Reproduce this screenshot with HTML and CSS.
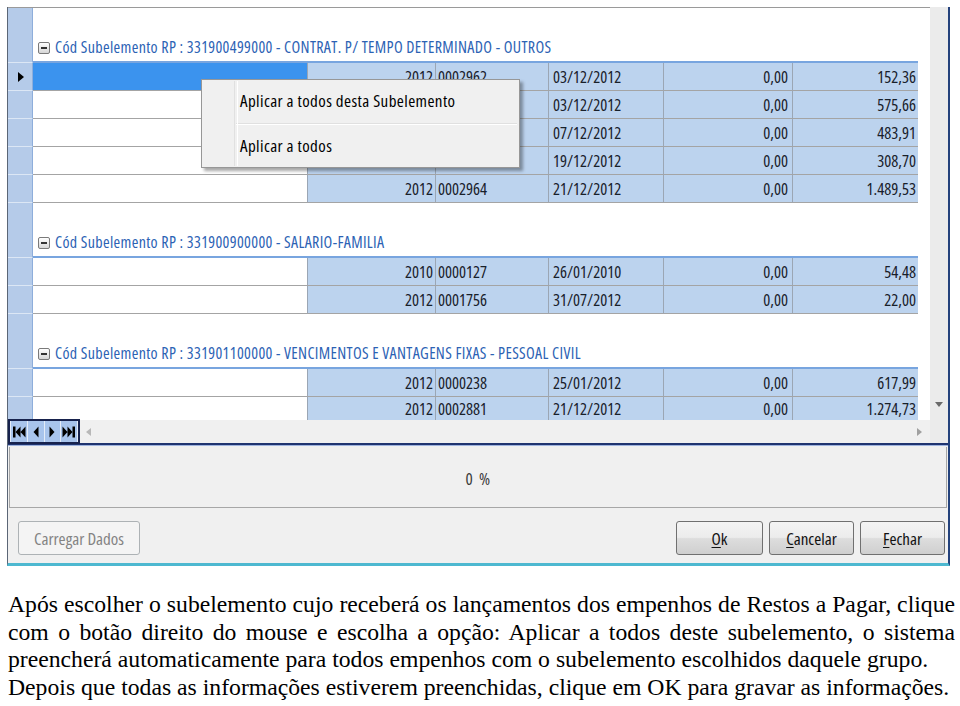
FILE: index.html
```html
<!DOCTYPE html>
<html lang="pt">
<head>
<meta charset="utf-8">
<title>Subelemento RP</title>
<link rel="stylesheet" href="styles.css">
</head>
<body>
<div class="shot">
  <div class="window">
    <div class="gridpanel">
      <div class="gridleft">
        <div class="viewport">
          <div class="ghead"><div class="ind"></div><div class="title"><span class="tog"></span>Cód Subelemento RP : 331900499000 - CONTRAT. P/ TEMPO DETERMINADO - OUTROS</div></div>
          <div class="row sel"><div class="ind"><svg class="cur" width="6" height="10" viewBox="0 0 6 10"><path d="M0 0 6 5 0 10Z"/></svg></div><div class="c c0"></div><div class="c r">2012</div><div class="c l">0002962</div><div class="c d">03/12/2012</div><div class="c r4">0,00</div><div class="c r">152,36</div></div>
          <div class="row"><div class="ind"></div><div class="c c0"></div><div class="c r"></div><div class="c l"></div><div class="c d">03/12/2012</div><div class="c r4">0,00</div><div class="c r">575,66</div></div>
          <div class="row"><div class="ind"></div><div class="c c0"></div><div class="c r"></div><div class="c l"></div><div class="c d">07/12/2012</div><div class="c r4">0,00</div><div class="c r">483,91</div></div>
          <div class="row"><div class="ind"></div><div class="c c0"></div><div class="c r"></div><div class="c l"></div><div class="c d">19/12/2012</div><div class="c r4">0,00</div><div class="c r">308,70</div></div>
          <div class="row"><div class="ind"></div><div class="c c0"></div><div class="c r">2012</div><div class="c l">0002964</div><div class="c d">21/12/2012</div><div class="c r4">0,00</div><div class="c r">1.489,53</div></div>

          <div class="ghead"><div class="ind"></div><div class="title"><span class="tog"></span>Cód Subelemento RP : 331900900000 - SALARIO-FAMILIA</div></div>
          <div class="row"><div class="ind"></div><div class="c c0"></div><div class="c r">2010</div><div class="c l">0000127</div><div class="c d">26/01/2010</div><div class="c r4">0,00</div><div class="c r">54,48</div></div>
          <div class="row"><div class="ind"></div><div class="c c0"></div><div class="c r">2012</div><div class="c l">0001756</div><div class="c d">31/07/2012</div><div class="c r4">0,00</div><div class="c r">22,00</div></div>

          <div class="ghead"><div class="ind"></div><div class="title"><span class="tog"></span>Cód Subelemento RP : 331901100000 - VENCIMENTOS E VANTAGENS FIXAS - PESSOAL CIVIL</div></div>
          <div class="row"><div class="ind"></div><div class="c c0"></div><div class="c r">2012</div><div class="c l">0000238</div><div class="c d">25/01/2012</div><div class="c r4">0,00</div><div class="c r">617,99</div></div>
          <div class="row last"><div class="ind"></div><div class="c c0"></div><div class="c r">2012</div><div class="c l">0002881</div><div class="c d">21/12/2012</div><div class="c r4">0,00</div><div class="c r">1.274,73</div></div>
        </div>
        <div class="hbar">
          <div class="nav">
            <span class="nb"><svg width="14" height="14" viewBox="0 0 14 14"><rect x="1" y="1.5" width="2.5" height="11"/><path d="M8.5 1.5 3.5 7 8.5 12.5Z M13.5 1.5 8.5 7 13.5 12.5Z"/></svg></span>
            <span class="nb"><svg width="14" height="14" viewBox="0 0 14 14"><path d="M9.5 1.5 4.5 7 9.5 12.5Z"/></svg></span>
            <span class="nb"><svg width="14" height="14" viewBox="0 0 14 14"><path d="M4.5 1.5 9.5 7 4.5 12.5Z"/></svg></span>
            <span class="nb"><svg width="14" height="14" viewBox="0 0 14 14"><path d="M0.5 1.5 5.5 7 0.5 12.5Z M5.5 1.5 10.5 7 5.5 12.5Z"/><rect x="10.5" y="1.5" width="2.5" height="11"/></svg></span>
          </div>
          <svg class="larr" width="5" height="8" viewBox="0 0 5 8"><path d="M5 0 0 4 5 8Z"/></svg>
          <svg class="rarr" width="5" height="8" viewBox="0 0 5 8"><path d="M0 0 5 4 0 8Z"/></svg>
        </div>
      </div>
      <div class="vscroll">
        <svg class="darr" width="8" height="5" viewBox="0 0 8 5"><path d="M0 0 8 0 4 5Z"/></svg>
      </div>
    </div>
    <div class="progress">0 %</div>
    <div class="buttons">
      <button class="btn dis" type="button">Carregar Dados</button>
      <div class="right">
        <button class="btn ok" type="button"><u>O</u>k</button>
        <button class="btn" type="button"><u>C</u>ancelar</button>
        <button class="btn" type="button"><u>F</u>echar</button>
      </div>
    </div>
  </div>
  <div class="outside"></div>

  <div class="menu">
    <div class="mi">Aplicar a todos desta Subelemento</div>
    <div class="msep"></div>
    <div class="mi">Aplicar a todos</div>
  </div>
</div>
<p class="caption">
<span class="ln j">Após escolher o subelemento cujo receberá os lançamentos dos empenhos de Restos a Pagar, clique</span>
<span class="ln j">com o botão direito do mouse e escolha a opção: Aplicar a todos deste subelemento, o sistema</span>
<span class="ln">preencherá automaticamente para todos empenhos com o subelemento escolhidos daquele grupo.</span>
<span class="ln">Depois que todas as informações estiverem preenchidas, clique em OK para gravar as informações.</span>
</p>
</body>
</html>
```
FILE: styles.css
```css
* { box-sizing: border-box; }
body { margin: 0; background: #fff; }

.shot {
  position: relative;
  height: 591px;
  padding-top: 7px;
  display: flex;
  font-family: "Open Sans", "DejaVu Sans Condensed", sans-serif;
  font-stretch: 75%;
  color: #18202a;
}
.window {
  margin-left: 7px;
  width: 943px;
  height: 559px;
  border-left: 1px solid #5b6676;
  border-right: 2px solid #24427c;
  border-bottom: 3px solid #4db8d0;
  background: #f0f0f0;
  display: flex;
  flex-direction: column;
}
.outside { flex: 1; background: #fff; }

/* grid */
.gridpanel {
  display: flex;
  border-bottom: 2px solid #1f3470;
  box-shadow: 0 1px 0 #9fb3de;
  margin-bottom: 2px;
}
.gridleft { width: 922px; }
.viewport {
  height: 413px;
  border-top: 1px solid #9a9a9a;
  overflow: hidden;
  background: #fff;
}
.row {
  display: grid;
  grid-template-columns: 25px 274px 128px 113px 115px 129px 126px;
  height: 28px;
  font-size: 16.5px;
}
.row.last .c { align-items: flex-start; padding-top: 3px; line-height: 18px; }
.ghead {
  display: grid;
  grid-template-columns: 25px 885px;
  height: 55px;
}
.ind {
  background: #b5cbe9;
  border-right: 1px solid #8eaedb;
  border-bottom: 1px solid #dce7f5;
  display: flex;
  align-items: center;
  justify-content: center;
}
.cur { fill: #000; margin-left: 1px; }
.title {
  border-bottom: 2px solid #78a5df;
  display: flex;
  align-items: flex-end;
  padding: 0 0 4px 5px;
  font-size: 16px;
  letter-spacing: 0.35px;
  line-height: 19px;
  color: #2c62b4;
}
.tog {
  width: 12px;
  height: 12px;
  margin: 0 5px 3px 0;
  border: 1px solid #7a7a7a;
  border-radius: 2px;
  background: linear-gradient(#ffffff, #d6d6d6);
  position: relative;
}
.tog::after {
  content: "";
  position: absolute;
  left: 2px;
  right: 2px;
  top: 4px;
  height: 2px;
  background: #333;
}
.c {
  border-bottom: 1px solid #a4a4a4;
  border-left: 1px solid #9ba6b4;
  background: #bcd3ee;
  display: flex;
  align-items: center;
  white-space: nowrap;
  overflow: hidden;
}
.c0 { background: #fff; border-left: none; }
.sel .c0 { background: #3b93ee; }
.r { justify-content: flex-end; padding-right: 2px; }
.r4 { justify-content: flex-end; padding-right: 4px; }
.l { padding-left: 2px; }
.d { padding-left: 4px; }

.hbar {
  height: 23px;
  display: flex;
  align-items: center;
  background: #f0f0f0;
}
.nav {
  align-self: flex-start;
  margin-top: -1px;
  height: 25px;
  width: 72px;
  border: 2px solid #17224d;
  background: #e4ecf8;
  display: flex;
  gap: 1px;
  padding: 0 1px;
}
.nb {
  flex: 1;
  background: #a8c4ec;
  display: flex;
  align-items: center;
  justify-content: center;
}
.nb svg { fill: #000; }
.larr { fill: #b8b8b8; margin-left: 6px; }
.rarr { fill: #a0a0a0; margin-left: auto; margin-right: 8px; }
.vscroll {
  width: 18px;
  background: #ebebeb;
  display: flex;
  flex-direction: column;
  align-items: center;
  justify-content: flex-end;
  padding-bottom: 36px;
}
.darr { fill: #6a6a6a; }

/* progress */
.progress {
  height: 61px;
  margin: 0 1px;
  border: 1px solid #a7a7a7;
  border-top: none;
  display: flex;
  align-items: center;
  justify-content: center;
  padding-top: 3px;
  font-size: 17px;
  letter-spacing: 0.5px;
  word-spacing: 2px;
  color: #3a3a3a;
}

/* buttons */
.buttons {
  height: 55px;
  display: flex;
  align-items: flex-start;
  padding: 13px 3px 0 10px;
}
.right { margin-left: auto; display: flex; gap: 6px; }
.btn {
  height: 34px;
  width: 85px;
  border: 1px solid #707070;
  border-radius: 3px;
  background: linear-gradient(#f4f4f4 0%, #ececec 48%, #dddddd 52%, #cfcfcf 100%);
  font-family: inherit;
  font-stretch: 75%;
  font-size: 17px;
  color: #111;
  padding: 0;
}
.btn.ok { width: 87px; }
.btn u { text-decoration: underline; text-underline-offset: 2px; }
.btn.dis {
  width: 122px;
  border-color: #adb2b5;
  background: #f4f4f4;
  color: #838383;
}

/* context menu */
.menu {
  position: absolute;
  left: 201px;
  top: 79px;
  width: 319px;
  height: 89px;
  border: 1px solid #979797;
  background: #f0f0f0;
  box-shadow: 3px 3px 3px rgba(0, 0, 0, 0.35);
  display: flex;
  flex-direction: column;
  font-size: 17px;
  letter-spacing: 0.4px;
  color: #000;
}
.menu::before {
  content: "";
  position: absolute;
  left: 32px;
  top: 1px;
  bottom: 1px;
  width: 2px;
  border-left: 1px solid #e0e0e0;
  border-right: 1px solid #fff;
}
.mi {
  height: 43px;
  display: flex;
  align-items: center;
  padding-left: 38px;
  padding-bottom: 2px;
}
.mi + .msep + .mi { height: 42px; padding-bottom: 1px; }
.msep {
  height: 2px;
  margin-left: 34px;
  margin-right: 2px;
  border-top: 1px solid #e0e0e0;
  border-bottom: 1px solid #fff;
}

/* caption */
.caption {
  margin: 0;
  padding: 0 5px 0 8px;
  font-family: "Liberation Serif", "Times New Roman", serif;
  font-size: 23.7px;
  line-height: 27.7px;
  color: #000;
}
.ln { display: block; white-space: nowrap; }
.j { text-align: justify; text-align-last: justify; }
```
